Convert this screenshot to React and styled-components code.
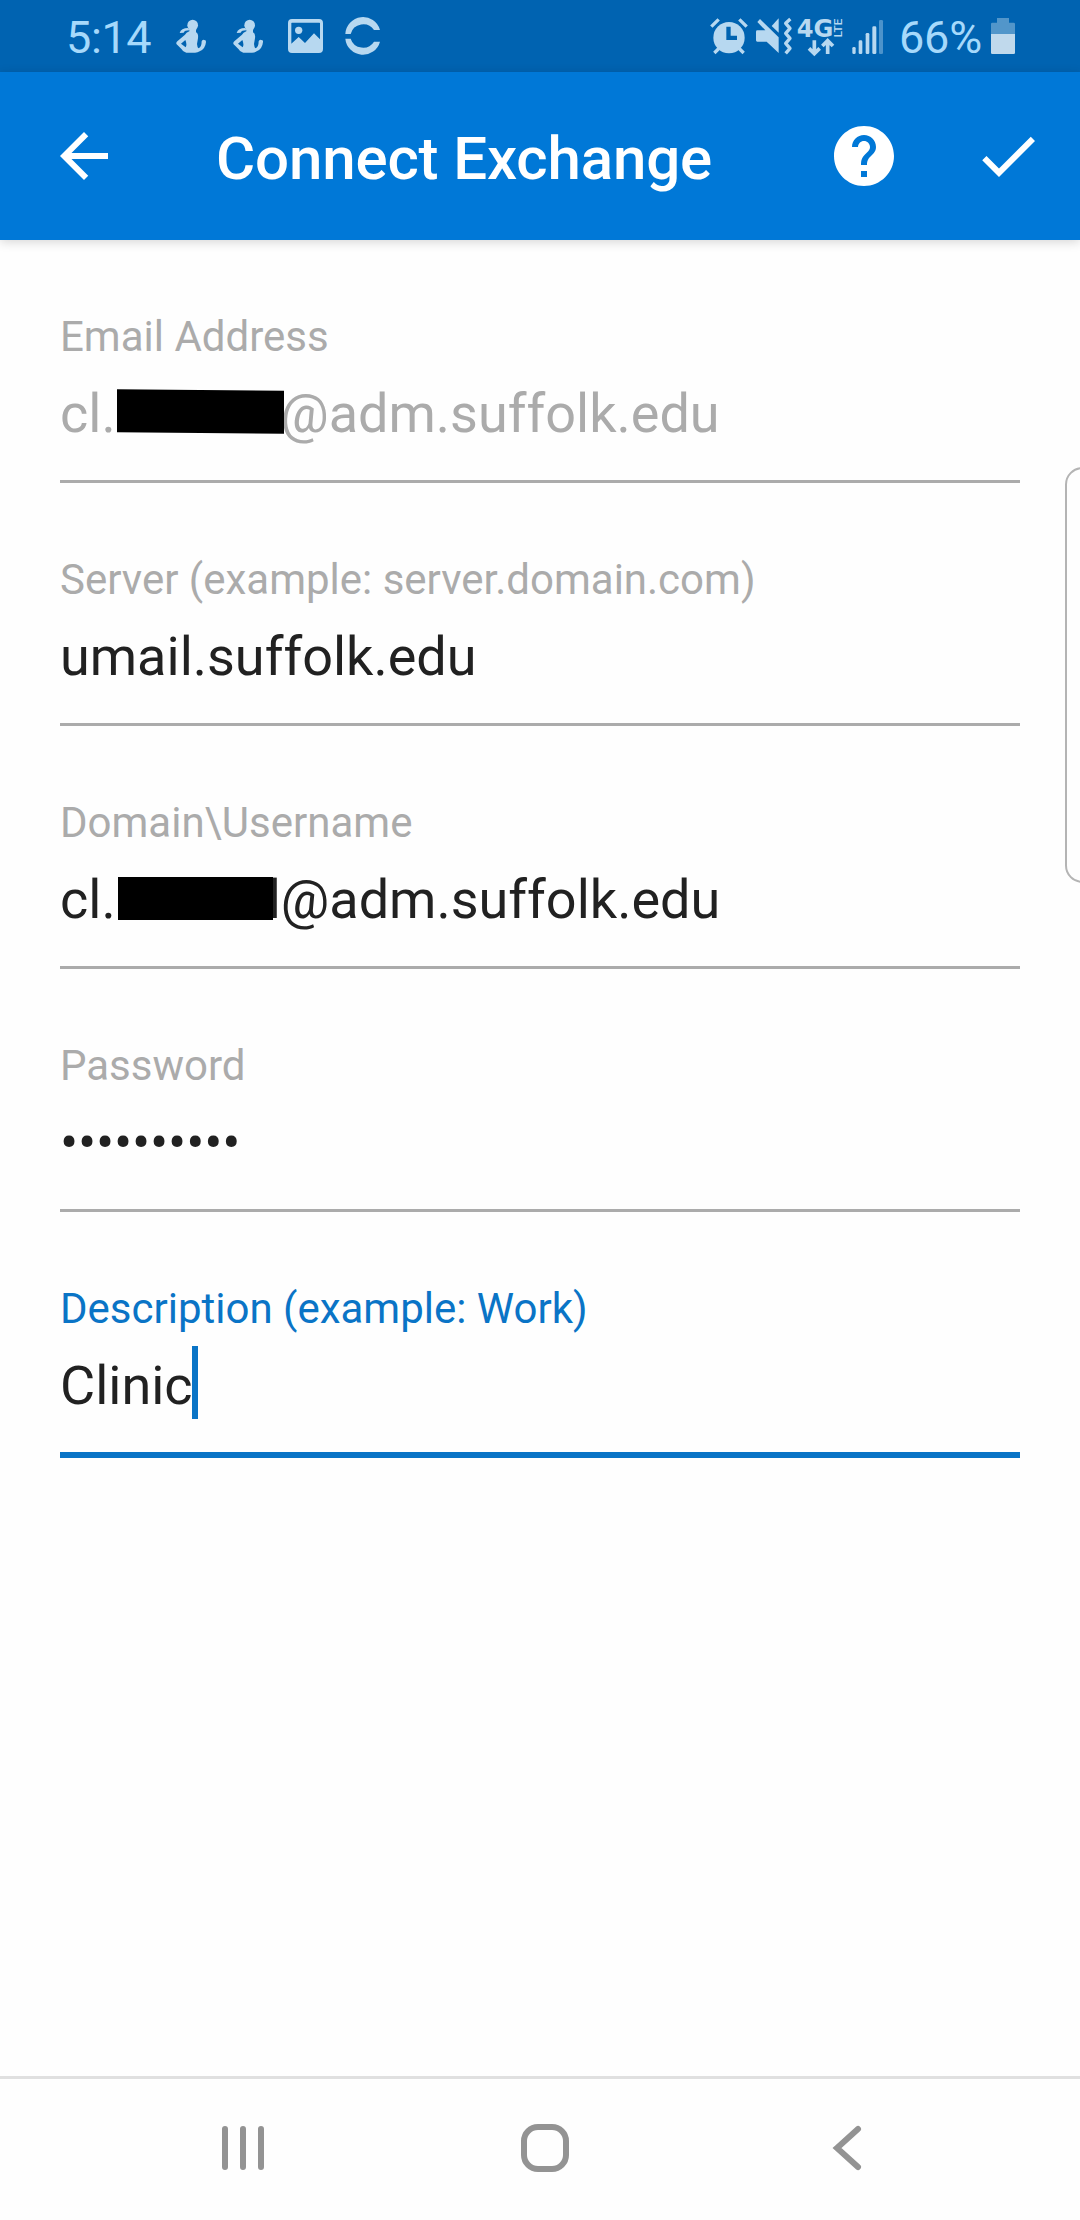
import React from "react";
import styled, { createGlobalStyle } from "styled-components";

const GlobalStyle = createGlobalStyle`
  * { box-sizing: border-box; }
  body { margin: 0; background: #fefefe; }
`;

const Screen = styled.div`
  position: relative;
  display: flex;
  flex-direction: column;
  width: 1080px;
  height: 2220px;
  overflow: hidden;
  background: #fefefe;
  font-family: Roboto, "Liberation Sans", sans-serif;
`;

const StatusBar = styled.div`
  display: flex;
  justify-content: space-between;
  height: 72px;
  padding: 0 65px 0 66px;
  background: #0063b1;
  color: #a6d9fb;
`;

const StatusGroup = styled.div`
  display: flex;
`;

const StatusText = styled.span`
  width: ${(p) => p.$width}px;
  margin-left: ${(p) => p.$gap || 0}px;
  font-size: 45px;
  line-height: 76px;
  letter-spacing: ${(p) => p.$tracking || 0}px;
  white-space: nowrap;
`;

const StatusSvg = styled.svg`
  flex: none;
  height: 72px;
  margin-left: ${(p) => p.$gap || 0}px;
  fill: #b7d8f0;
  color: #b7d8f0;
  overflow: visible;
`;

const AppBar = styled.header`
  display: flex;
  align-items: center;
  height: 168px;
  flex: none;
  padding: 0 36px 0 48px;
  background: #0078d7;
  color: #fff;
  box-shadow: 0 2px 10px rgba(0, 0, 0, 0.16);
`;

const IconButton = styled.button`
  display: flex;
  width: 72px;
  height: 72px;
  padding: 0;
  border: 0;
  margin: 0 0 0 ${(p) => p.$gap || 0}px;
  background: none;
  color: inherit;

  svg {
    width: 72px;
    height: 72px;
    fill: currentColor;
  }
`;

const Title = styled.h1`
  flex: 1;
  margin: 5px 0 0 96px;
  font-size: 60px;
  font-weight: 500;
  line-height: 72px;
  letter-spacing: -0.15px;
  white-space: nowrap;
`;

const Form = styled.main`
  display: flex;
  flex-direction: column;
  flex: 1;
  padding: 0 60px;
`;

const Field = styled.div`
  display: flex;
  flex-direction: column;
  height: ${(p) => (p.$active ? 246 : 243)}px;
  padding-top: 73px;
  border-bottom: ${(p) => (p.$active ? "6px solid #0a74c6" : "3px solid #ababab")};
`;

const Label = styled.label`
  font-size: 42px;
  line-height: 48px;
  color: ${(p) => (p.$active ? "#0a74c6" : "#ababab")};
  white-space: nowrap;
`;

const Value = styled.div`
  display: flex;
  height: 64px;
  margin-top: 21px;
  font-size: 54px;
  line-height: 64px;
  letter-spacing: ${(p) => p.$tracking || 0}px;
  color: ${(p) => (p.$muted ? "#ababab" : "#212121")};
  white-space: nowrap;
`;

const Redaction = styled.span`
  flex: none;
  width: ${(p) => p.$width}px;
  height: 43px;
  margin: ${(p) => p.$top}px ${(p) => p.$after}px 0 ${(p) => p.$before}px;
  background: #000;
  transform: skewY(${(p) => p.$skew || 0}deg);
`;

const Caret = styled.span`
  width: 6px;
  height: 73px;
  margin: -8px 0 0 -1px;
  background: #0a74c6;
`;

const EdgeHandle = styled.div`
  position: absolute;
  top: 467px;
  right: -20px;
  width: 35px;
  height: 416px;
  border: 2px solid #b4b4b4;
  border-radius: 20px;
  background: #fefefe;
`;

const NavBar = styled.nav`
  display: flex;
  align-items: center;
  height: 144px;
  padding: 0 0 3px 216px;
  border-top: 3px solid #e0e0e0;
`;

const NavSvg = styled.svg`
  width: 54px;
  height: 54px;
  margin-left: ${(p) => p.$gap || 0}px;
  fill: none;
  stroke: #939393;
  stroke-width: 6;
  stroke-linecap: round;
`;

function PersonIcon({ gap }) {
  return (
    <StatusSvg $gap={gap} width="30" viewBox="379 0 90 216">
      <ellipse cx="429" cy="76" rx="16" ry="17" />
      <path d="M390 99Q394 84 416 84L419 91Q405 91 402 98Z" />
      <path
        fillRule="evenodd"
        d="M419 88h20v9q8 4 6 18l-3 17q1 9 4 13 10-3 10-21 2-6 8-4 6 0 5 6-2 21-19 28-7 5-17 4h-23q-11-2-14-10l-12-12q-8-5-1-12l23-20q3-6 13-10zM407 120l-13 11 14 11q5-8-1-22z"
      />
    </StatusSvg>
  );
}

function PictureIcon() {
  return (
    <StatusSvg $gap={25} width="35" viewBox="714 0 105 216">
      <path
        fillRule="evenodd"
        d="M726 57h81q12 0 12 12v78q0 12-12 12h-81q-12 0-12-12V69q0-12 12-12zM724 69v62l22-20 19 18 27-29 18 18V69q0-1-2-1h-82q-2 0-2 1z"
      />
      <circle cx="746" cy="91" r="11" />
    </StatusSvg>
  );
}

function SyncRingIcon() {
  return (
    <StatusSvg $gap={22} width="35" viewBox="884 0 105 216">
      <path d="M885 102A53 53 0 0 1 989 90H971A39 39 0 0 0 901 102Z" />
      <path d="M885 116A53 53 0 0 0 989 125H971A39 39 0 0 1 901 116Z" />
    </StatusSvg>
  );
}

function AlarmIcon() {
  return (
    <StatusSvg width="38" viewBox="30 0 114 216">
      <circle cx="87" cy="113" r="47" />
      <path
        d="M34 80L56 58M118 58L140 80M43 159L58 144M116 144L131 159"
        stroke="currentColor"
        strokeWidth="10"
      />
      <path d="M79 80h13v27h19v13H79z" fill="#0063b1" />
    </StatusSvg>
  );
}

function MuteVibrateIcon() {
  return (
    <StatusSvg $gap={8} width="36" viewBox="168 0 108 216">
      <path d="M236 55v43l-21-20z" />
      <path d="M180 57l56 55v47l-36-34h-28q-4 0-4-4V95q0-4 4-4h24l-24-25z" />
      <path
        d="M271 57L257 70 270 85 257 100 270 115 257 130 270 145 257 160"
        fill="none"
        stroke="currentColor"
        strokeWidth="10"
        strokeLinejoin="round"
      />
    </StatusSvg>
  );
}

function NetworkIcon() {
  return (
    <StatusSvg $gap={5} width="46" viewBox="291 0 138 216">
      <text
        x="290"
        y="111"
        fontFamily="DejaVu Sans, sans-serif"
        fontWeight="700"
        fontSize="73"
        textLength="110"
        lengthAdjust="spacingAndGlyphs"
      >
        4G
      </text>
      <text
        transform="translate(426 112) rotate(-90)"
        fontFamily="Roboto, sans-serif"
        fontSize="34"
        fontWeight="500"
        textLength="56"
        lengthAdjust="spacingAndGlyphs"
      >
        LTE
      </text>
      <g fill="none" stroke="currentColor" strokeWidth="11">
        <path d="M343 121v38M327 145l16 16 16-16" />
        <path d="M383 162v-37M367 138l16-16 16 16" />
      </g>
    </StatusSvg>
  );
}

function SignalIcon() {
  return (
    <StatusSvg $gap={9} width="31" viewBox="457 0 93 216">
      <rect x="458" y="141" width="10" height="21" rx="4" />
      <rect x="477" y="121" width="11" height="41" rx="4" />
      <rect x="498" y="99" width="11" height="63" rx="4" />
      <rect x="518" y="79" width="12" height="83" rx="4" />
      <rect x="538" y="60" width="12" height="102" rx="4" fill="#4c93cb" />
    </StatusSvg>
  );
}

function BatteryIcon() {
  return (
    <StatusSvg width="24" viewBox="873 0 72 216">
      <path d="M891 54h36v14h14q4 0 4 4v30h-72V72q0-4 4-4h14z" fill="#5296ca" />
      <path d="M873 102h72v56q0 4-4 4h-64q-4 0-4-4z" fill="#c0d9ec" />
    </StatusSvg>
  );
}

export default function App() {
  return (
    <Screen>
      <GlobalStyle />
      <StatusBar>
        <StatusGroup>
          <StatusText $width={110} $tracking={-0.4}>
            5:14
          </StatusText>
          <PersonIcon />
          <PersonIcon gap={27} />
          <PictureIcon />
          <SyncRingIcon />
        </StatusGroup>
        <StatusGroup>
          <AlarmIcon />
          <MuteVibrateIcon />
          <NetworkIcon />
          <SignalIcon />
          <StatusText $width={92} $gap={16} $tracking={-0.2}>
            66%
          </StatusText>
          <BatteryIcon />
        </StatusGroup>
      </StatusBar>

      <AppBar>
        <IconButton aria-label="Back">
          <svg viewBox="0 0 24 24">
            <path d="M20 11H7.83l5.59-5.59L12 4l-8 8 8 8 1.41-1.41L7.83 13H20v-2z" />
          </svg>
        </IconButton>
        <Title>Connect Exchange</Title>
        <IconButton aria-label="Help">
          <svg viewBox="0 0 24 24">
            <path d="M12 2C6.48 2 2 6.48 2 12s4.48 10 10 10 10-4.48 10-10S17.52 2 12 2zm1 17h-2v-2h2v2zm2.07-7.75l-.9.92C13.45 12.9 13 13.5 13 15h-2v-.5c0-1.1.45-2.1 1.17-2.83l1.24-1.26c.37-.36.59-.86.59-1.41 0-1.1-.9-2-2-2s-2 .9-2 2H8c0-2.21 1.79-4 4-4s4 1.79 4 4c0 .88-.36 1.68-.93 2.25z" />
          </svg>
        </IconButton>
        <IconButton aria-label="Done" $gap={72}>
          <svg viewBox="0 0 24 24">
            <path d="M9 16.17L4.83 12l-1.42 1.41L9 19 21 7l-1.41-1.41z" />
          </svg>
        </IconButton>
      </AppBar>

      <Form>
        <Field>
          <Label>Email Address</Label>
          <Value $muted>
            <span>cl.</span>
            <Redaction $width={167} $top={8} $before={1} $after={-3.5} $skew={0.56} />
            <span>@adm.suffolk.edu</span>
          </Value>
        </Field>
        <Field>
          <Label>Server (example: server.domain.com)</Label>
          <Value>umail.suffolk.edu</Value>
        </Field>
        <Field>
          <Label>Domain\Username</Label>
          <Value>
            <span>cl.</span>
            <Redaction $width={155} $top={9} $before={2} $after={-5} />
            <span>l@adm.suffolk.edu</span>
          </Value>
        </Field>
        <Field>
          <Label>Password</Label>
          <Value $tracking={-0.2}>••••••••••</Value>
        </Field>
        <Field $active>
          <Label $active>Description (example: Work)</Label>
          <Value>
            <span>Clinic</span>
            <Caret />
          </Value>
        </Field>
      </Form>

      <NavBar>
        <NavSvg viewBox="0 0 54 54">
          <path d="M9 8v38M27 8v38M45 8v38" />
        </NavSvg>
        <NavSvg viewBox="0 0 54 54" $gap={248}>
          <rect x="6" y="6" width="42" height="42" rx="14" />
        </NavSvg>
        <NavSvg viewBox="0 0 54 54" $gap={244}>
          <path d="M42 8L21 27 42 46" />
        </NavSvg>
      </NavBar>
      <EdgeHandle />
    </Screen>
  );
}
